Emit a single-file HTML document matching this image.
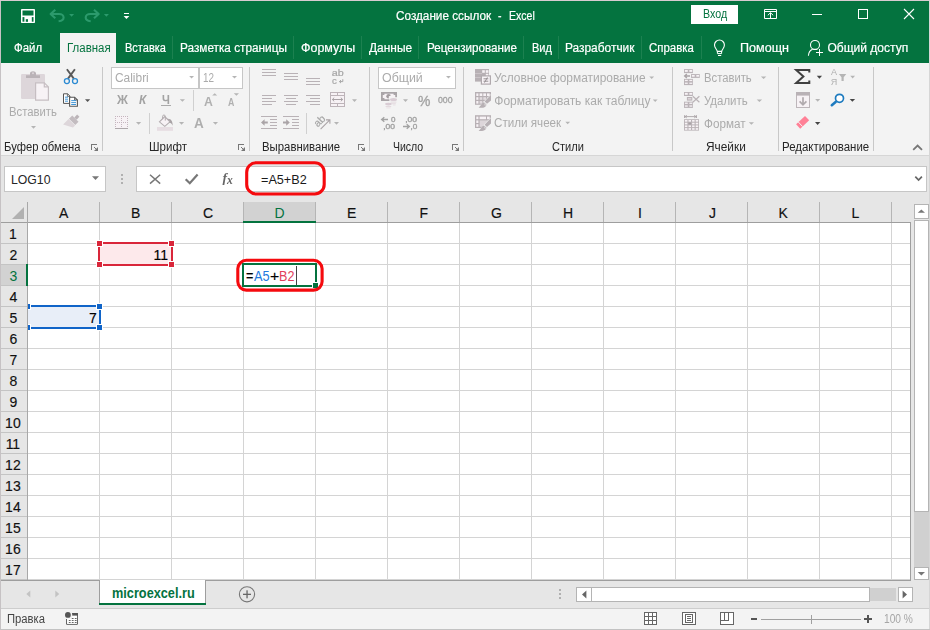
<!DOCTYPE html>
<html lang="ru"><head><meta charset="utf-8"><title>Excel</title>
<style>
html,body{margin:0;padding:0;}
body{width:930px;height:630px;overflow:hidden;position:relative;background:#e6e6e6;font-family:"Liberation Sans", sans-serif;}
#shapes,#icons{position:absolute;left:0;top:0;}
.g{position:absolute;left:0;top:0;width:930px;height:630px;will-change:transform;filter:opacity(1);}
.l{-webkit-text-stroke:0.15px;}
.t{position:absolute;white-space:pre;line-height:1;transform-origin:0 0;font-family:"Liberation Sans", sans-serif;}
</style></head><body>
<svg id="shapes" width="930" height="630" viewBox="0 0 930 630">
<g shape-rendering="crispEdges">
<rect x="0" y="0" width="930" height="630" fill="#e6e6e6" />
<rect x="0" y="0" width="930" height="63" fill="#04733f" />
<rect x="60" y="33" width="56" height="30" fill="#f3f3f3" />
<rect x="172" y="36" width="1" height="23" fill="#1c8150" />
<rect x="293" y="36" width="1" height="23" fill="#1c8150" />
<rect x="361" y="36" width="1" height="23" fill="#1c8150" />
<rect x="418" y="36" width="1" height="23" fill="#1c8150" />
<rect x="523" y="36" width="1" height="23" fill="#1c8150" />
<rect x="558" y="36" width="1" height="23" fill="#1c8150" />
<rect x="641" y="36" width="1" height="23" fill="#1c8150" />
<rect x="701" y="36" width="1" height="23" fill="#1c8150" />
<rect x="691" y="5" width="47" height="19" fill="#fff" rx="1"/>
<rect x="0" y="63" width="930" height="92" fill="#f3f3f3" />
<rect x="0" y="155" width="930" height="1" fill="#d6d6d6" />
<rect x="102" y="67" width="1" height="84" fill="#c8c8c8" />
<rect x="249" y="67" width="1" height="84" fill="#c8c8c8" />
<rect x="369" y="67" width="1" height="84" fill="#c8c8c8" />
<rect x="463" y="67" width="1" height="84" fill="#c8c8c8" />
<rect x="672" y="67" width="1" height="84" fill="#c8c8c8" />
<rect x="778" y="67" width="1" height="84" fill="#c8c8c8" />
<rect x="873" y="67" width="1" height="84" fill="#c8c8c8" />
<rect x="193" y="90" width="1" height="21" fill="#d0d0d0" />
<rect x="149" y="113" width="1" height="21" fill="#d0d0d0" />
<rect x="306" y="113" width="1" height="21" fill="#d0d0d0" />
<rect x="111" y="67" width="88" height="22" fill="#c6c6c6" />
<rect x="112" y="68" width="86" height="20" fill="#fff" />
<rect x="199" y="67" width="44" height="22" fill="#c6c6c6" />
<rect x="200" y="68" width="42" height="20" fill="#fff" />
<rect x="378" y="67" width="78" height="22" fill="#c6c6c6" />
<rect x="379" y="68" width="76" height="20" fill="#fff" />
<rect x="4" y="166" width="102" height="26" fill="#c6c6c6" />
<rect x="5" y="167" width="100" height="24" fill="#fff" />
<rect x="136" y="166" width="791" height="26" fill="#c6c6c6" />
<rect x="137" y="167" width="789" height="24" fill="#fff" />
<rect x="27" y="202" width="1" height="20" fill="#b5b5b5" />
<rect x="99" y="202" width="1" height="20" fill="#b5b5b5" />
<rect x="171" y="202" width="1" height="20" fill="#b5b5b5" />
<rect x="243" y="202" width="1" height="20" fill="#b5b5b5" />
<rect x="315" y="202" width="1" height="20" fill="#b5b5b5" />
<rect x="387" y="202" width="1" height="20" fill="#b5b5b5" />
<rect x="459" y="202" width="1" height="20" fill="#b5b5b5" />
<rect x="531" y="202" width="1" height="20" fill="#b5b5b5" />
<rect x="603" y="202" width="1" height="20" fill="#b5b5b5" />
<rect x="675" y="202" width="1" height="20" fill="#b5b5b5" />
<rect x="747" y="202" width="1" height="20" fill="#b5b5b5" />
<rect x="819" y="202" width="1" height="20" fill="#b5b5b5" />
<rect x="891" y="202" width="1" height="20" fill="#b5b5b5" />
<rect x="244" y="202" width="71" height="20" fill="#d2d2d2" />
<rect x="1" y="265" width="26" height="20" fill="#d2d2d2" />
<rect x="28" y="223" width="882" height="357" fill="#fff" />
<rect x="99" y="223" width="1" height="357" fill="#d4d4d4" />
<rect x="171" y="223" width="1" height="357" fill="#d4d4d4" />
<rect x="243" y="223" width="1" height="357" fill="#d4d4d4" />
<rect x="315" y="223" width="1" height="357" fill="#d4d4d4" />
<rect x="387" y="223" width="1" height="357" fill="#d4d4d4" />
<rect x="459" y="223" width="1" height="357" fill="#d4d4d4" />
<rect x="531" y="223" width="1" height="357" fill="#d4d4d4" />
<rect x="603" y="223" width="1" height="357" fill="#d4d4d4" />
<rect x="675" y="223" width="1" height="357" fill="#d4d4d4" />
<rect x="747" y="223" width="1" height="357" fill="#d4d4d4" />
<rect x="819" y="223" width="1" height="357" fill="#d4d4d4" />
<rect x="891" y="223" width="1" height="357" fill="#d4d4d4" />
<rect x="28" y="243" width="882" height="1" fill="#d4d4d4" />
<rect x="1" y="243" width="26" height="1" fill="#c4c4c4" />
<rect x="28" y="264" width="882" height="1" fill="#d4d4d4" />
<rect x="1" y="264" width="26" height="1" fill="#c4c4c4" />
<rect x="28" y="285" width="882" height="1" fill="#d4d4d4" />
<rect x="1" y="285" width="26" height="1" fill="#c4c4c4" />
<rect x="28" y="306" width="882" height="1" fill="#d4d4d4" />
<rect x="1" y="306" width="26" height="1" fill="#c4c4c4" />
<rect x="28" y="327" width="882" height="1" fill="#d4d4d4" />
<rect x="1" y="327" width="26" height="1" fill="#c4c4c4" />
<rect x="28" y="348" width="882" height="1" fill="#d4d4d4" />
<rect x="1" y="348" width="26" height="1" fill="#c4c4c4" />
<rect x="28" y="369" width="882" height="1" fill="#d4d4d4" />
<rect x="1" y="369" width="26" height="1" fill="#c4c4c4" />
<rect x="28" y="390" width="882" height="1" fill="#d4d4d4" />
<rect x="1" y="390" width="26" height="1" fill="#c4c4c4" />
<rect x="28" y="411" width="882" height="1" fill="#d4d4d4" />
<rect x="1" y="411" width="26" height="1" fill="#c4c4c4" />
<rect x="28" y="432" width="882" height="1" fill="#d4d4d4" />
<rect x="1" y="432" width="26" height="1" fill="#c4c4c4" />
<rect x="28" y="453" width="882" height="1" fill="#d4d4d4" />
<rect x="1" y="453" width="26" height="1" fill="#c4c4c4" />
<rect x="28" y="474" width="882" height="1" fill="#d4d4d4" />
<rect x="1" y="474" width="26" height="1" fill="#c4c4c4" />
<rect x="28" y="495" width="882" height="1" fill="#d4d4d4" />
<rect x="1" y="495" width="26" height="1" fill="#c4c4c4" />
<rect x="28" y="516" width="882" height="1" fill="#d4d4d4" />
<rect x="1" y="516" width="26" height="1" fill="#c4c4c4" />
<rect x="28" y="537" width="882" height="1" fill="#d4d4d4" />
<rect x="1" y="537" width="26" height="1" fill="#c4c4c4" />
<rect x="28" y="558" width="882" height="1" fill="#d4d4d4" />
<rect x="1" y="558" width="26" height="1" fill="#c4c4c4" />
<rect x="28" y="579" width="882" height="1" fill="#d4d4d4" />
<rect x="1" y="579" width="26" height="1" fill="#c4c4c4" />
<rect x="0" y="222" width="911" height="1" fill="#9e9e9e" />
<rect x="27" y="202" width="1" height="379" fill="#a8a8a8" />
<rect x="26" y="264" width="2" height="22" fill="#04733f" />
<rect x="243" y="221" width="73" height="2" fill="#04733f" />
<rect x="910" y="222" width="1" height="359" fill="#9e9e9e" />
<rect x="0" y="580" width="911" height="1" fill="#9e9e9e" />
<rect x="100" y="244" width="71" height="20" fill="#fde9eb" />
<rect x="98" y="242" width="75" height="2" fill="#d9263a" />
<rect x="98" y="264" width="75" height="2" fill="#d9263a" />
<rect x="98" y="242" width="2" height="24" fill="#d9263a" />
<rect x="171" y="242" width="2" height="24" fill="#d9263a" />
<rect x="168" y="240" width="7" height="7" fill="#fff" />
<rect x="169" y="241" width="5" height="5" fill="#d9263a" />
<rect x="168" y="261" width="7" height="7" fill="#fff" />
<rect x="169" y="262" width="5" height="5" fill="#d9263a" />
<rect x="96" y="240" width="7" height="7" fill="#fff" />
<rect x="97" y="241" width="5" height="5" fill="#d9263a" />
<rect x="96" y="261" width="7" height="7" fill="#fff" />
<rect x="97" y="262" width="5" height="5" fill="#d9263a" />
<rect x="28" y="307" width="71" height="20" fill="#e8eef8" />
<rect x="28" y="305" width="73" height="2" fill="#1064c8" />
<rect x="28" y="327" width="73" height="2" fill="#1064c8" />
<rect x="99" y="305" width="2" height="24" fill="#1064c8" />
<rect x="96" y="303" width="7" height="7" fill="#fff" />
<rect x="97" y="304" width="5" height="5" fill="#1064c8" />
<rect x="96" y="324" width="7" height="7" fill="#fff" />
<rect x="97" y="325" width="5" height="5" fill="#1064c8" />
<rect x="28" y="303" width="3" height="7" fill="#fff" />
<rect x="28" y="304" width="2" height="5" fill="#1064c8" />
<rect x="28" y="324" width="3" height="7" fill="#fff" />
<rect x="28" y="325" width="2" height="5" fill="#1064c8" />
<rect x="244" y="265" width="71" height="20" fill="#fff" />
<rect x="242" y="263" width="75" height="2" fill="#04733f" />
<rect x="242" y="285" width="75" height="2" fill="#04733f" />
<rect x="242" y="263" width="2" height="24" fill="#04733f" />
<rect x="315" y="263" width="2" height="24" fill="#04733f" />
<rect x="312" y="282" width="7" height="7" fill="#fff" />
<rect x="313" y="283" width="5" height="5" fill="#04733f" />
<rect x="296" y="266" width="1" height="19" fill="#444" />
<rect x="911" y="202" width="19" height="378" fill="#e6e6e6" />
<rect x="914" y="204" width="15" height="15" fill="#b4b4b4" />
<rect x="915" y="205" width="13" height="13" fill="#fff" />
<rect x="914" y="220" width="15" height="292" fill="#b4b4b4" />
<rect x="915" y="221" width="13" height="290" fill="#fff" />
<rect x="914" y="512" width="15" height="55" fill="#d0d0d0" />
<rect x="914" y="567" width="15" height="13" fill="#b4b4b4" />
<rect x="915" y="568" width="13" height="11" fill="#fff" />
<rect x="0" y="581" width="930" height="27" fill="#e6e6e6" />
<rect x="99" y="580" width="107" height="23" fill="#9e9e9e" />
<rect x="100" y="580" width="105" height="23" fill="#fff" />
<rect x="99" y="603" width="107" height="2" fill="#04733f" />
<rect x="576" y="587" width="16" height="15" fill="#b4b4b4" />
<rect x="577" y="588" width="14" height="13" fill="#fff" />
<rect x="591" y="587" width="279" height="15" fill="#b4b4b4" />
<rect x="592" y="588" width="277" height="13" fill="#fff" />
<rect x="870" y="588" width="26" height="13" fill="#d0d0d0" />
<rect x="898" y="587" width="15" height="15" fill="#b4b4b4" />
<rect x="899" y="588" width="13" height="13" fill="#fff" />
<rect x="559" y="589" width="2" height="2" fill="#b0b0b0" />
<rect x="559" y="593" width="2" height="2" fill="#b0b0b0" />
<rect x="559" y="597" width="2" height="2" fill="#b0b0b0" />
<rect x="121" y="174" width="2" height="2" fill="#b0b0b0" />
<rect x="121" y="178" width="2" height="2" fill="#b0b0b0" />
<rect x="121" y="182" width="2" height="2" fill="#b0b0b0" />
<rect x="0" y="608" width="930" height="22" fill="#f3f3f3" />
<rect x="0" y="608" width="930" height="1" fill="#cdcdcd" />
<rect x="761" y="619" width="100" height="1" fill="#a0a0a0" />
<rect x="811" y="615" width="1" height="9" fill="#a0a0a0" />
<rect x="751" y="618" width="6" height="2" fill="#555" />
<rect x="864" y="618" width="8" height="2" fill="#555" />
<rect x="867" y="615" width="2" height="8" fill="#555" />
<rect x="0" y="0" width="1" height="630" fill="#c6c2c4" />
<rect x="0" y="0" width="930" height="1" fill="#d8ccd1" />
<rect x="929" y="0" width="1" height="630" fill="#d6d6d6" />
<rect x="0" y="629" width="930" height="1" fill="#c2c2c2" />
</g>
</svg>
<span class="t" style="left:10.69px;top:173px;font-size:13.5px;color:#262626;transform:scaleX(0.9068);">LOG10</span>
<span class="t" style="left:261.30px;top:173px;font-size:13.5px;color:#1a1a1a;transform:scaleX(0.9361);">=A5+B2</span>
<span class="t l" style="left:59.00px;top:206px;font-size:14px;color:#111111;">A</span>
<span class="t l" style="left:131.00px;top:206px;font-size:14px;color:#111111;">B</span>
<span class="t l" style="left:203.00px;top:206px;font-size:14px;color:#111111;">C</span>
<span class="t" style="left:274.50px;top:206px;font-size:14px;color:#04733f;">D</span>
<span class="t l" style="left:347.00px;top:206px;font-size:14px;color:#111111;">E</span>
<span class="t l" style="left:419.50px;top:206px;font-size:14px;color:#111111;">F</span>
<span class="t l" style="left:491.00px;top:206px;font-size:14px;color:#111111;">G</span>
<span class="t l" style="left:563.00px;top:206px;font-size:14px;color:#111111;">H</span>
<span class="t l" style="left:638.00px;top:206px;font-size:14px;color:#111111;">I</span>
<span class="t l" style="left:709.00px;top:206px;font-size:14px;color:#111111;">J</span>
<span class="t l" style="left:778.50px;top:206px;font-size:14px;color:#111111;">K</span>
<span class="t l" style="left:851.50px;top:206px;font-size:14px;color:#111111;">L</span>
<span class="t l" style="left:9.00px;top:227px;font-size:14px;color:#111111;">1</span>
<span class="t l" style="left:9.50px;top:248px;font-size:14px;color:#111111;">2</span>
<span class="t" style="left:9.50px;top:269px;font-size:14px;color:#04733f;">3</span>
<span class="t l" style="left:9.50px;top:290px;font-size:14px;color:#111111;">4</span>
<span class="t l" style="left:9.50px;top:311px;font-size:14px;color:#111111;">5</span>
<span class="t l" style="left:9.50px;top:332px;font-size:14px;color:#111111;">6</span>
<span class="t l" style="left:9.50px;top:353px;font-size:14px;color:#111111;">7</span>
<span class="t l" style="left:9.50px;top:374px;font-size:14px;color:#111111;">8</span>
<span class="t l" style="left:9.50px;top:395px;font-size:14px;color:#111111;">9</span>
<span class="t l" style="left:5.11px;top:416px;font-size:14px;color:#111111;">10</span>
<span class="t l" style="left:5.63px;top:437px;font-size:14px;color:#111111;">11</span>
<span class="t l" style="left:5.11px;top:458px;font-size:14px;color:#111111;">12</span>
<span class="t l" style="left:5.11px;top:479px;font-size:14px;color:#111111;">13</span>
<span class="t l" style="left:5.11px;top:500px;font-size:14px;color:#111111;">14</span>
<span class="t l" style="left:5.11px;top:521px;font-size:14px;color:#111111;">15</span>
<span class="t l" style="left:5.11px;top:542px;font-size:14px;color:#111111;">16</span>
<span class="t l" style="left:5.11px;top:563px;font-size:14px;color:#111111;">17</span>
<span class="t l" style="left:153.45px;top:248px;font-size:14px;color:#000;">11</span>
<span class="t l" style="left:89.00px;top:311px;font-size:14px;color:#000;">7</span>
<span class="t l" style="left:246.30px;top:269px;font-size:14px;color:#000;transform:scaleX(0.9000);">=</span>
<span class="t" style="left:254.40px;top:269px;font-size:14px;color:#2279e0;transform:scaleX(0.9113);">A5</span>
<span class="t l" style="left:270.00px;top:269px;font-size:14px;color:#000;transform:scaleX(1.1250);">+</span>
<span class="t" style="left:279.30px;top:269px;font-size:14px;color:#e2405c;transform:scaleX(0.8997);">B2</span>
<span class="t" style="left:111.70px;top:586px;font-size:14px;color:#04733f;font-weight:bold;transform:scaleX(0.9083);">microexcel.ru</span>
<div class="g">
<svg id="icons" width="930" height="630" viewBox="0 0 930 630">
<rect x="21" y="9" width="14" height="14" fill="#fff" rx="0.8"/>
<rect x="22.5" y="10.5" width="11" height="5" fill="#04733f" />
<rect x="22.5" y="17.1" width="1.9" height="4.6" fill="#04733f" />
<rect x="31.8" y="17.1" width="1.7" height="4.6" fill="#04733f" />
<rect x="25.8" y="19.2" width="2.2" height="2.6" fill="#04733f" />
<path d="M55.3 9.7L50.6 14L55.3 18.3M51 14H59C62 14 63.6 15.8 63.6 17.5C63.6 19.6 61.6 21 58.6 21.3" fill="none" stroke="#2c9a6c" stroke-width="2.1" stroke-linejoin="round"/>
<path d="M69.1 14H74.1L71.6 16.8Z" fill="#2c9a6c" />
<path d="M94 9.7L98.7 14L94 18.3M98.3 14H90.3C87.3 14 85.7 15.8 85.7 17.5C85.7 19.6 87.7 21 90.7 21.3" fill="none" stroke="#2c9a6c" stroke-width="2.1" stroke-linejoin="round"/>
<path d="M103.9 14H108.9L106.4 16.8Z" fill="#2c9a6c" />
<rect x="124" y="13" width="5" height="1" fill="#fff" />
<path d="M123.6 16H129.4L126.5 19Z" fill="#fff" />
<path d="M764.5 9.5H776.5V18.5H764.5ZM764.5 11.5H776.5" fill="none" stroke="#fff" stroke-width="1" />
<path d="M770.5 18V13M767.8 15.3L770.5 12.7L773.2 15.3" fill="none" stroke="#fff" stroke-width="1" />
<rect x="812" y="14" width="10" height="1" fill="#fff" shape-rendering="crispEdges"/>
<path d="M858.5 9.5H867.5V18.5H858.5Z" fill="none" stroke="#fff" stroke-width="1" shape-rendering="crispEdges"/>
<path d="M904 9L914 19M914 9L904 19" fill="none" stroke="#fff" stroke-width="1.1" />
<path d="M717.3 51.4C717 49.3 714.5 48 714.5 45A4.95 4.95 0 1 1 724.4 45C724.4 48 722 49.3 721.7 51.4Z" fill="none" stroke="#fff" stroke-width="1.1" />
<path d="M717.4 51.5H721.6V53.6H717.4Z" fill="none" stroke="#fff" stroke-width="1" />
<rect x="718" y="55" width="3.2" height="1" fill="#fff" />
<circle cx="815" cy="44.9" r="4.5" fill="none" stroke="#fff" stroke-width="1.05"/>
<path d="M812.6 49.2C810 50.2 808.6 52.5 808.4 55.8" fill="none" stroke="#fff" stroke-width="1.05" />
<path d="M812.6 49.3H817.5" fill="none" stroke="#fff" stroke-width="1" />
<rect x="816" y="52" width="7" height="1" fill="#fff" />
<rect x="819" y="49" width="1" height="7" fill="#fff" />
<rect x="21" y="74" width="24" height="25" fill="#ddd6da" rx="1.3"/>
<path d="M26 78V75.2H30V73.2C30 70.5 36 70.5 36 73.2V75.2H40V78Z" fill="#bab3b7" />
<circle cx="33" cy="73.3" r="1" fill="#ddd6da"/>
<path d="M35.6 82.8H44.3L48.4 86.9V100.2H35.6Z" fill="#f7f2f5" stroke="#c6bec2" stroke-width="1.2" />
<path d="M44.3 82.8V86.9H48.4" fill="none" stroke="#c6bec2" stroke-width="1.2" />
<path d="M31 126H36L33.5 128.8Z" fill="#b5b5b5" />
<path d="M66.9 69.3L73.8 78.6M74.9 69.3L68 78.6" fill="none" stroke="#595959" stroke-width="1.9" />
<circle cx="66.9" cy="81.1" r="2.5" fill="none" stroke="#2b8ad2" stroke-width="1.3"/>
<circle cx="75" cy="81.1" r="2.5" fill="none" stroke="#2b8ad2" stroke-width="1.3"/>
<path d="M63.5 93.8H67.6L70 96.2V103.4H63.5Z" fill="#fff" stroke="#555" stroke-width="1" />
<path d="M69.6 97.2H74.6L77.4 100V106.3H69.6Z" fill="#fff" stroke="#555" stroke-width="1.1" />
<path d="M74.6 97.2V100H77.4" fill="none" stroke="#555" stroke-width="0.9" />
<path d="M67.4 93.8V96.4H70" fill="none" stroke="#555" stroke-width="0.8" />
<rect x="65" y="96.7" width="3" height="0.9" fill="#2b8ad2" />
<rect x="65" y="98.7" width="3" height="0.9" fill="#2b8ad2" />
<rect x="65" y="100.7" width="3" height="0.9" fill="#2b8ad2" />
<rect x="71.2" y="100.2" width="4.8" height="0.9" fill="#2b8ad2" />
<rect x="71.2" y="102.2" width="4.8" height="0.9" fill="#2b8ad2" />
<rect x="71.2" y="104.1" width="4.8" height="0.9" fill="#2b8ad2" />
<path d="M85 99.2H90.2L87.6 102Z" fill="#555" />
<g transform="translate(71,123) rotate(-45)">
<rect x="6.3" y="-1.6" width="4" height="3.2" fill="#bbb4b8" />
<rect x="1.6" y="-4.4" width="4.6" height="8.8" fill="#c3bcc0" />
<path d="M1.2 -4.6L-6.6 -4.6L-1.8 4.6L1.2 4.6Z" fill="#ddd6da" />
</g>
<path d="M189.2 76H194L191.6 78.4Z" fill="#b5b5b5" />
<path d="M232 76H237L234.5 78.4Z" fill="#b5b5b5" />
<rect x="161" y="105" width="10" height="1" fill="#ababab" />
<path d="M179.8 99.2H185L182.4 101.8Z" fill="#b5b5b5" />
<path d="M212.2 95.6L214.7 93.2L217.2 95.6Z" fill="#b5b5b5" />
<path d="M233.8 93.3H239L236.4 95.8Z" fill="#b5b5b5" />
<rect x="115" y="116" width="13" height="12" fill="#f7f2f5" />
<path d="M115.5 116V128M121.5 116V128M127.5 116V128M115 116.5H128M115 122.5H128" fill="none" stroke="#c4b6be" stroke-width="1" stroke-dasharray="1 1" shape-rendering="crispEdges"/>
<rect x="115" y="128" width="13" height="1" fill="#aea8ab" />
<path d="M136 122H141.2L138.6 124.7Z" fill="#b5b5b5" />
<path d="M159.4 121.8L164.8 116.5L170 121.8L164.8 126.3Z" fill="#f7f2f5" stroke="#b3adb0" stroke-width="1.1" />
<path d="M162.6 119.2V116.2C162.6 114.6 165.3 114.6 165.3 116.2V120.6" fill="none" stroke="#b3adb0" stroke-width="1" />
<path d="M167.4 118.7C171 118.4 172.9 121.3 172.6 125.7C171.5 123.3 170.4 122.7 168.8 122.6L170.2 121.6Z" fill="#a8a2a5" />
<rect x="157" y="127" width="16" height="3.8" fill="#e6dde2" />
<path d="M179 122H184.1L181.55 124.7Z" fill="#b5b5b5" />
<path d="M212.9 122H218L215.45 124.7Z" fill="#b5b5b5" />
<rect x="262" y="69" width="14" height="1" fill="#b9b2b6" shape-rendering="crispEdges"/>
<rect x="262" y="72" width="14" height="1" fill="#b9b2b6" shape-rendering="crispEdges"/>
<rect x="262" y="75" width="14" height="1" fill="#b9b2b6" shape-rendering="crispEdges"/>
<rect x="284" y="73" width="14" height="1" fill="#b9b2b6" shape-rendering="crispEdges"/>
<rect x="284" y="76" width="14" height="1" fill="#b9b2b6" shape-rendering="crispEdges"/>
<rect x="284" y="79" width="14" height="1" fill="#b9b2b6" shape-rendering="crispEdges"/>
<rect x="306" y="78" width="14" height="1" fill="#b9b2b6" shape-rendering="crispEdges"/>
<rect x="306" y="81" width="14" height="1" fill="#b9b2b6" shape-rendering="crispEdges"/>
<rect x="306" y="84" width="14" height="1" fill="#b9b2b6" shape-rendering="crispEdges"/>
<rect x="262" y="95" width="14" height="1" fill="#b9b2b6" shape-rendering="crispEdges"/>
<rect x="262" y="98" width="10" height="1" fill="#b9b2b6" shape-rendering="crispEdges"/>
<rect x="262" y="101" width="14" height="1" fill="#b9b2b6" shape-rendering="crispEdges"/>
<rect x="262" y="104" width="10" height="1" fill="#b9b2b6" shape-rendering="crispEdges"/>
<rect x="284.0" y="95" width="14" height="1" fill="#b9b2b6" shape-rendering="crispEdges"/>
<rect x="286.0" y="98" width="10" height="1" fill="#b9b2b6" shape-rendering="crispEdges"/>
<rect x="284.0" y="101" width="14" height="1" fill="#b9b2b6" shape-rendering="crispEdges"/>
<rect x="286.0" y="104" width="10" height="1" fill="#b9b2b6" shape-rendering="crispEdges"/>
<rect x="306" y="95" width="14" height="1" fill="#b9b2b6" shape-rendering="crispEdges"/>
<rect x="310" y="98" width="10" height="1" fill="#b9b2b6" shape-rendering="crispEdges"/>
<rect x="306" y="101" width="14" height="1" fill="#b9b2b6" shape-rendering="crispEdges"/>
<rect x="310" y="104" width="10" height="1" fill="#b9b2b6" shape-rendering="crispEdges"/>
<text x="331.7" y="76.3" font-family="Liberation Sans" font-size="9.6" fill="#a6a6a6" font-weight="normal" font-style="normal" textLength="12" lengthAdjust="spacingAndGlyphs" stroke="#a6a6a6" stroke-width="0.2">ab</text>
<text x="331.9" y="83.8" font-family="Liberation Sans" font-size="9.6" fill="#a6a6a6" font-weight="normal" font-style="normal" stroke="#a6a6a6" stroke-width="0.2">c</text>
<path d="M342.8 79.2V81.6H339.6M341 80.1L339.4 81.6L341 83.1" fill="none" stroke="#a6a6a6" stroke-width="1" />
<rect x="330.5" y="92.5" width="14" height="14" fill="#f7f2f5" stroke="#bdb4b9" stroke-width="1"/>
<path d="M330.5 95.5H344.5M330.5 103.5H344.5M337.5 92.5V95.5M337.5 103.5V106.5" fill="none" stroke="#bdb4b9" stroke-width="1" shape-rendering="crispEdges"/>
<path d="M332.4 99.5H342.6M334.2 97.7L332.3 99.5L334.2 101.3M340.8 97.7L342.7 99.5L340.8 101.3" fill="none" stroke="#a9a3a6" stroke-width="1" />
<path d="M352 99.2H357L354.5 101.9Z" fill="#b5b5b5" />
<rect x="261" y="116" width="16" height="1" fill="#b9b2b6" shape-rendering="crispEdges"/>
<rect x="261" y="128" width="16" height="1" fill="#b9b2b6" shape-rendering="crispEdges"/>
<rect x="269.5" y="119" width="7.5" height="1" fill="#b9b2b6" shape-rendering="crispEdges"/>
<rect x="269.5" y="122" width="7.5" height="1" fill="#b9b2b6" shape-rendering="crispEdges"/>
<rect x="269.5" y="125" width="7.5" height="1" fill="#b9b2b6" shape-rendering="crispEdges"/>
<rect x="283" y="116" width="16" height="1" fill="#b9b2b6" shape-rendering="crispEdges"/>
<rect x="283" y="128" width="16" height="1" fill="#b9b2b6" shape-rendering="crispEdges"/>
<rect x="291.5" y="119" width="7.5" height="1" fill="#b9b2b6" shape-rendering="crispEdges"/>
<rect x="291.5" y="122" width="7.5" height="1" fill="#b9b2b6" shape-rendering="crispEdges"/>
<rect x="291.5" y="125" width="7.5" height="1" fill="#b9b2b6" shape-rendering="crispEdges"/>
<path d="M261 122.5L264.6 119.2V121.5H267.8V123.5H264.6V125.8Z" fill="#aaa4a7" />
<path d="M289.8 122.5L286.2 119.2V121.5H283V123.5H286.2V125.8Z" fill="#aaa4a7" />
<g transform="translate(320.3,121.6) rotate(-45)">
<text x="-6" y="2.4" font-family="Liberation Sans" font-size="10.5" fill="#a6a6a6" font-weight="normal" font-style="normal" stroke="#a6a6a6" stroke-width="0.2">ab</text>
</g>
<path d="M320.6 129.2L329.6 120.2M326 119.9H329.9V123.8" fill="none" stroke="#aaa4a7" stroke-width="1.1" />
<path d="M334 122H339L336.5 124.7Z" fill="#b5b5b5" />
<path d="M446 76H450.9L448.45 78.4Z" fill="#b5b5b5" />
<rect x="381" y="92" width="16" height="9" fill="#aaa5a8" />
<path d="M384.4 93.8H393.6V94.9H395.2V98.1H393.6V99.2H384.4V98.1H382.8V94.9H384.4Z" fill="#f7f2f5" />
<circle cx="388.6" cy="96.3" r="2.3" fill="#a39da0"/>
<path d="M388.8 96.3L391.2 95.4V98.9H388.8Z" fill="#f7f2f5" />
<rect x="389.4" y="97.2" width="8.2" height="8.6" fill="#f3f3f3" />
<ellipse cx="393.5" cy="99.5" rx="3.5" ry="1.5" fill="#d9ccd4"/>
<rect x="390.6" y="101.6" width="5.8" height="0.9" fill="#e1d6dc" />
<rect x="391.2" y="103.3" width="4.6" height="0.9" fill="#e1d6dc" />
<rect x="393" y="104.6" width="2.6" height="0.8" fill="#e6dde2" />
<ellipse cx="388.4" cy="104.1" rx="3.3" ry="1.4" fill="#d9ccd4"/>
<rect x="385.6" y="106" width="5.6" height="0.9" fill="#e1d6dc" />
<rect x="386.2" y="107.5" width="4.4" height="0.8" fill="#e6dde2" />
<path d="M403 99.2H408L405.5 101.9Z" fill="#b5b5b5" />
<path d="M388 119.5H382M384.3 117.2L381.6 119.5L384.3 121.8" fill="none" stroke="#a3a3a3" stroke-width="1.3" />
<text x="391" y="121.5" font-family="Liberation Sans" font-size="8" fill="#a3a3a3" font-weight="normal" font-style="normal" stroke="#a3a3a3" stroke-width="0.4">0</text>
<text x="383.2" y="128.8" font-family="Liberation Sans" font-size="8" fill="#a3a3a3" font-weight="normal" font-style="normal" textLength="11.8" lengthAdjust="spacingAndGlyphs" stroke="#a3a3a3" stroke-width="0.4">,00</text>
<text x="405.2" y="121.5" font-family="Liberation Sans" font-size="8" fill="#a3a3a3" font-weight="normal" font-style="normal" textLength="11.8" lengthAdjust="spacingAndGlyphs" stroke="#a3a3a3" stroke-width="0.4">,00</text>
<path d="M403 126.5H409M406.7 124.2L409.4 126.5L406.7 128.8" fill="none" stroke="#a3a3a3" stroke-width="1.3" />
<text x="410.4" y="128.8" font-family="Liberation Sans" font-size="8" fill="#a3a3a3" font-weight="normal" font-style="normal" textLength="6.8" lengthAdjust="spacingAndGlyphs" stroke="#a3a3a3" stroke-width="0.4">,0</text>
<rect x="475" y="69" width="14" height="12.6" fill="#b7b0b4" />
<rect x="482.2" y="70.2" width="2.6" height="2.6" fill="#f7f2f5" />
<rect x="485.8" y="70.2" width="2.6" height="2.6" fill="#f7f2f5" />
<rect x="485.8" y="73.8" width="2.6" height="2.6" fill="#f7f2f5" />
<rect x="475" y="73" width="7" height="0.8" fill="#cfc8cc" />
<rect x="475" y="77" width="6" height="0.8" fill="#cfc8cc" />
<rect x="481.4" y="75.9" width="9" height="8.2" fill="#f7f2f5" stroke="#b0a9ad" stroke-width="1.2"/>
<path d="M483.5 78.8H488.3M483.5 81.2H488.3M487.4 77.4L484.5 82.6" fill="none" stroke="#8e888b" stroke-width="0.9" />
<rect x="475" y="92" width="16" height="12.8" fill="#b7b0b4" />
<rect x="476.3" y="93.4" width="2.1" height="2.6" fill="#f7f2f5" />
<rect x="479.6" y="93.4" width="2.7" height="2.6" fill="#f7f2f5" />
<rect x="483.3" y="93.4" width="2.7" height="2.6" fill="#f7f2f5" />
<rect x="487" y="93.4" width="2.7" height="2.6" fill="#f7f2f5" />
<rect x="476.3" y="97.2" width="2.1" height="2.6" fill="#f7f2f5" />
<rect x="479.6" y="97.2" width="2.7" height="2.6" fill="#e2dbdf" />
<rect x="483.3" y="97.2" width="2.7" height="2.6" fill="#e2dbdf" />
<rect x="487" y="97.2" width="2.7" height="2.6" fill="#e2dbdf" />
<rect x="476.3" y="101" width="2.1" height="2.6" fill="#f7f2f5" />
<rect x="479.6" y="101" width="2.7" height="2.6" fill="#e2dbdf" />
<rect x="483.3" y="101" width="2.7" height="2.6" fill="#e2dbdf" />
<rect x="487" y="101" width="2.7" height="2.6" fill="#e2dbdf" />
<path d="M491.8 93.2L491.8 105.6L480 105.6Z" fill="#f3f3f3" />
<path d="M491 94.8L491 100.4L487 103.8L484.6 101.6Z" fill="#b7b0b4" />
<path d="M484 102.2C481.4 102.6 481.4 105.6 478.6 107.6C482.6 108.4 486.4 107.2 486.4 104.4Z" fill="#b7b0b4" />
<path d="M484.4 103.8C485.2 104.2 485.4 104.8 485.2 105.6" fill="none" stroke="#f3f3f3" stroke-width="0.8" />
<rect x="475" y="115.2" width="16" height="12.8" fill="#b7b0b4" />
<rect x="476.3" y="116.60000000000001" width="2.1" height="2.6" fill="#f7f2f5" />
<rect x="479.6" y="116.60000000000001" width="6.4" height="2.6" fill="#f7f2f5" />
<rect x="487" y="116.60000000000001" width="2.7" height="2.6" fill="#f7f2f5" />
<rect x="476.3" y="120.4" width="2.1" height="2.6" fill="#f7f2f5" />
<rect x="476.3" y="124.2" width="2.1" height="2.6" fill="#f7f2f5" />
<rect x="479.6" y="120.4" width="10.1" height="6.4" fill="#ddd6da" />
<path d="M491.8 116.4L491.8 128.8L480 128.8Z" fill="#f3f3f3" />
<path d="M491 118.0L491 123.60000000000001L487 127.0L484.6 124.8Z" fill="#b7b0b4" />
<path d="M484 125.4C481.4 125.8 481.4 128.8 478.6 130.8C482.6 131.6 486.4 130.4 486.4 127.60000000000001Z" fill="#b7b0b4" />
<path d="M484.4 127.0C485.2 127.4 485.4 128.0 485.2 128.8" fill="none" stroke="#f3f3f3" stroke-width="0.8" />
<path d="M649.3 76.4H654.1L651.7 78.9Z" fill="#b5b5b5" />
<path d="M652.8 99.4H657.6L655.2 101.9Z" fill="#b5b5b5" />
<path d="M565.3 121.8H570.1L567.7 124.3Z" fill="#b5b5b5" />
<rect x="684" y="69.1" width="8.9" height="4.0" fill="#bab3b7" />
<rect x="684.9" y="70.0" width="2.85" height="1.9" fill="#f7f2f5" />
<rect x="689.35" y="70.0" width="2.85" height="1.9" fill="#f7f2f5" />
<rect x="691" y="74.1" width="8.8" height="3.8000000000000003" fill="#bab3b7" />
<rect x="691.9" y="75.0" width="2.8000000000000003" height="1.7000000000000002" fill="#f7f2f5" />
<rect x="696.3" y="75.0" width="2.8000000000000003" height="1.7000000000000002" fill="#f7f2f5" />
<rect x="684" y="78.9" width="8.9" height="6.199999999999999" fill="#bab3b7" />
<rect x="684.9" y="79.80000000000001" width="2.85" height="1.2999999999999998" fill="#f7f2f5" />
<rect x="684.9" y="82.60000000000001" width="2.85" height="1.2999999999999998" fill="#f7f2f5" />
<rect x="689.35" y="79.80000000000001" width="2.85" height="1.2999999999999998" fill="#f7f2f5" />
<rect x="689.35" y="82.60000000000001" width="2.85" height="1.2999999999999998" fill="#f7f2f5" />
<path d="M690 76H685M686.9 74L684.6 76L686.9 78" fill="none" stroke="#a9a3a6" stroke-width="1.3" />
<rect x="684" y="92" width="8.9" height="4.0" fill="#bab3b7" />
<rect x="684.9" y="92.9" width="2.85" height="1.9" fill="#f7f2f5" />
<rect x="689.35" y="92.9" width="2.85" height="1.9" fill="#f7f2f5" />
<rect x="684" y="101.7" width="8.9" height="6.199999999999999" fill="#bab3b7" />
<rect x="684.9" y="102.60000000000001" width="2.85" height="1.2999999999999998" fill="#f7f2f5" />
<rect x="684.9" y="105.4" width="2.85" height="1.2999999999999998" fill="#f7f2f5" />
<rect x="689.35" y="102.60000000000001" width="2.85" height="1.2999999999999998" fill="#f7f2f5" />
<rect x="689.35" y="105.4" width="2.85" height="1.2999999999999998" fill="#f7f2f5" />
<rect x="686.9" y="97" width="5.4" height="3.6" fill="#bab3b7" />
<rect x="687.9" y="98" width="3.4" height="1.6" fill="#dcd5d9" />
<path d="M692.8 96.2L699.4 102.2M699.4 96.2L692.8 102.2" fill="none" stroke="#bab3b7" stroke-width="1.2" />
<path d="M684.5 115.2V118M696.5 115.2V118M685 116.6H696M686.8 115.3L685 116.6L686.8 117.9M694.2 115.3L696 116.6L694.2 117.9" fill="none" stroke="#aaa4a7" stroke-width="0.9" />
<rect x="684" y="119.2" width="15" height="11.4" fill="#bab3b7" />
<rect x="684.9" y="120.0" width="2.5" height="1.7" fill="#f7f2f5" />
<rect x="684.9" y="122.7" width="2.5" height="1.7" fill="#f7f2f5" />
<rect x="684.9" y="125.4" width="2.5" height="1.7" fill="#f7f2f5" />
<rect x="684.9" y="128.1" width="2.5" height="1.7" fill="#f7f2f5" />
<rect x="688.5" y="120.0" width="2.5" height="1.7" fill="#f7f2f5" />
<rect x="688.5" y="122.7" width="2.5" height="1.7" fill="#a9a2a6" />
<rect x="688.5" y="125.4" width="2.5" height="1.7" fill="#f7f2f5" />
<rect x="688.5" y="128.1" width="2.5" height="1.7" fill="#f7f2f5" />
<rect x="692.1" y="120.0" width="2.5" height="1.7" fill="#f7f2f5" />
<rect x="692.1" y="122.7" width="2.5" height="1.7" fill="#f7f2f5" />
<rect x="692.1" y="125.4" width="2.5" height="1.7" fill="#f7f2f5" />
<rect x="692.1" y="128.1" width="2.5" height="1.7" fill="#f7f2f5" />
<rect x="695.6999999999999" y="120.0" width="2.5" height="1.7" fill="#f7f2f5" />
<rect x="695.6999999999999" y="122.7" width="2.5" height="1.7" fill="#f7f2f5" />
<rect x="695.6999999999999" y="125.4" width="2.5" height="1.7" fill="#f7f2f5" />
<rect x="695.6999999999999" y="128.1" width="2.5" height="1.7" fill="#f7f2f5" />
<path d="M760.9 76.4H766.3L763.5999999999999 78.9Z" fill="#b5b5b5" />
<path d="M756.7 99.4H762.1L759.4000000000001 101.9Z" fill="#b5b5b5" />
<path d="M748.8 122.2H754L751.4 124.7Z" fill="#b5b5b5" />
<path d="M809.3 72.4V69.9H796.2L803.4 76.4L796.2 82.9H809.3V80.4" fill="none" stroke="#404040" stroke-width="2" stroke-linejoin="miter"/>
<path d="M816.8 75.8H822L819.4 78.8Z" fill="#444" />
<text x="830.9" y="75.4" font-family="Liberation Sans" font-size="9" fill="#b0b0b0" font-weight="normal" font-style="normal" >A</text>
<text x="830.7" y="84.9" font-family="Liberation Sans" font-size="9" fill="#b0b0b0" font-weight="normal" font-style="normal" >Я</text>
<path d="M838.9 74.1H846.3L843.7 77.2V80.9H841.5V77.2Z" fill="#b5b5b5" />
<path d="M850.3 75.8H855L852.65 78.6Z" fill="#b5b5b5" />
<rect x="796.5" y="92.5" width="13" height="15" fill="#f7f2f5" stroke="#bdb6ba" stroke-width="1"/>
<rect x="796" y="92" width="14" height="3.6" fill="#b9b2b6" />
<path d="M803 97.2V104.6M799.6 101.4L803 104.9L806.4 101.4" fill="none" stroke="#b0aaad" stroke-width="1.7" />
<path d="M815.2 99H820.2L817.7 101.7Z" fill="#b5b5b5" />
<path d="M835.6 102L831.8 105.2" fill="none" stroke="#1e7bbf" stroke-width="2.6" stroke-linecap="round"/>
<circle cx="839.5" cy="98.3" r="4" fill="#fff" stroke="#1e7bbf" stroke-width="1.7"/>
<path d="M849.7 99H855.1L852.4000000000001 101.8Z" fill="#444" />
<path d="M805 116L809.2 120.2L800.2 128.7L796.1 124.2Z" fill="#ff8096" />
<path d="M798.3 122L802.5 126.5" fill="none" stroke="#f3f3f3" stroke-width="1" />
<path d="M815 122H820.3L817.65 125Z" fill="#444" />
<path d="M913.2 149.8L917.6 145.5L922 149.8" fill="none" stroke="#777" stroke-width="1.8" />
<rect x="91" y="144" width="6" height="1" fill="#777" shape-rendering="crispEdges"/>
<rect x="91" y="144" width="1" height="6" fill="#777" shape-rendering="crispEdges"/>
<path d="M98 147V151H94Z" fill="#777" />
<path d="M94 147L96.5 149.5" fill="none" stroke="#777" stroke-width="1" />
<rect x="238" y="144" width="6" height="1" fill="#777" shape-rendering="crispEdges"/>
<rect x="238" y="144" width="1" height="6" fill="#777" shape-rendering="crispEdges"/>
<path d="M245 147V151H241Z" fill="#777" />
<path d="M241 147L243.5 149.5" fill="none" stroke="#777" stroke-width="1" />
<rect x="358" y="144" width="6" height="1" fill="#777" shape-rendering="crispEdges"/>
<rect x="358" y="144" width="1" height="6" fill="#777" shape-rendering="crispEdges"/>
<path d="M365 147V151H361Z" fill="#777" />
<path d="M361 147L363.5 149.5" fill="none" stroke="#777" stroke-width="1" />
<rect x="452" y="144" width="6" height="1" fill="#777" shape-rendering="crispEdges"/>
<rect x="452" y="144" width="1" height="6" fill="#777" shape-rendering="crispEdges"/>
<path d="M459 147V151H455Z" fill="#777" />
<path d="M455 147L457.5 149.5" fill="none" stroke="#777" stroke-width="1" />
<path d="M92 176.3H99L95.5 179.9Z" fill="#777" />
<path d="M150 174.8L160.2 183.6M160.2 174.8L150 183.6" fill="none" stroke="#777" stroke-width="1.5" />
<path d="M185.7 179.2L189.8 183.2L197.6 174.6" fill="none" stroke="#777" stroke-width="2.2" />
<text x="222.6" y="182.2" font-family="Liberation Serif" font-size="13.5" fill="#666" font-weight="bold" font-style="italic" >f</text>
<text x="227" y="183.7" font-family="Liberation Serif" font-size="11.5" fill="#666" font-weight="bold" font-style="italic" >x</text>
<path d="M915.3 176.6L918.6 180L921.9 176.6" fill="none" stroke="#666" stroke-width="1.7" />
<path d="M24 207V219H12Z" fill="#b1b1b1" />
<path d="M917.7 212.8H925L921.35 209.4Z" fill="#777" />
<path d="M917.7 572H925L921.35 575.4Z" fill="#777" />
<path d="M586.4 590.6V598.4L582 594.5Z" fill="#666" />
<path d="M902.6 590.6V598.4L907 594.5Z" fill="#666" />
<path d="M30.3 590.6V597.4L26.3 594Z" fill="#c3c3c3" />
<path d="M55.3 590.6V597.4L59.3 594Z" fill="#c3c3c3" />
<circle cx="247" cy="594.3" r="7.6" fill="none" stroke="#777" stroke-width="1.1"/>
<rect x="243" y="593.7" width="8" height="1.3" fill="#666" />
<rect x="246.4" y="590.3" width="1.3" height="8" fill="#666" />
<circle cx="67.9" cy="614.9" r="2.9" fill="#555"/>
<path d="M66.6 619V624.3H77.4V613.5H72.2" fill="none" stroke="#555" stroke-width="1" />
<rect x="67.1" y="618.8" width="9.8" height="5" fill="#fff" />
<rect x="72.2" y="615.5" width="4.7" height="4" fill="#fff" />
<rect x="72.2" y="613" width="5.7" height="2.6" fill="#555" />
<rect x="71.8" y="618" width="1.8" height="0.9" fill="#555" />
<rect x="74.8" y="618" width="1.8" height="0.9" fill="#555" />
<rect x="68.8" y="620" width="1.8" height="0.9" fill="#555" />
<rect x="71.8" y="620" width="1.8" height="0.9" fill="#555" />
<rect x="74.8" y="620" width="1.8" height="0.9" fill="#555" />
<rect x="68.8" y="622" width="1.8" height="0.9" fill="#555" />
<rect x="71.8" y="622" width="1.8" height="0.9" fill="#555" />
<rect x="74.8" y="622" width="1.8" height="0.9" fill="#555" />
<rect x="644.5" y="612.5" width="12" height="12" fill="#fff" stroke="#666" stroke-width="1" shape-rendering="crispEdges"/>
<path d="M648.5 612.5V624.5M652.5 612.5V624.5M644.5 616.5H656.5M644.5 620.5H656.5" fill="none" stroke="#666" stroke-width="1" shape-rendering="crispEdges"/>
<rect x="682.5" y="612.5" width="13" height="12" fill="#fff" stroke="#666" stroke-width="1" shape-rendering="crispEdges"/>
<rect x="685.5" y="614.5" width="7" height="8" fill="#fff" stroke="#666" stroke-width="1" shape-rendering="crispEdges"/>
<path d="M687 616.5H691M687 618.5H691M687 620.5H691" fill="none" stroke="#666" stroke-width="1" shape-rendering="crispEdges"/>
<rect x="720.5" y="612.5" width="13" height="12" fill="#fff" stroke="#666" stroke-width="1" shape-rendering="crispEdges"/>
<path d="M724.5 612.5V620M728.5 612.5V620.5M720.5 620.5H729" fill="none" stroke="#666" stroke-width="1" shape-rendering="crispEdges"/>
<rect x="246.7" y="162.7" width="77.5" height="31.3" rx="9.5" fill="none" stroke="#f50a0e" stroke-width="3.1"/>
<rect x="237.8" y="260.3" width="84.3" height="29.8" rx="8.5" fill="none" stroke="#f50a0e" stroke-width="3.1"/>
</svg>
<span class="t" style="left:395.50px;top:10px;font-size:12px;color:#ffffff;-webkit-text-stroke:0.2px;transform:scaleX(0.9786);">Создание ссылок</span>
<span class="t" style="left:498.00px;top:10px;font-size:12px;color:#ffffff;-webkit-text-stroke:0.2px;transform:scaleX(0.8750);">-</span>
<span class="t" style="left:508.70px;top:10px;font-size:12px;color:#ffffff;-webkit-text-stroke:0.2px;transform:scaleX(0.8787);">Excel</span>
<span class="t" style="left:702.80px;top:8px;font-size:12px;color:#04733f;transform:scaleX(0.8878);">Вход</span>
<span class="t" style="left:14.20px;top:42px;font-size:12px;color:#ffffff;-webkit-text-stroke:0.2px;transform:scaleX(0.9525);">Файл</span>
<span class="t" style="left:66.50px;top:42px;font-size:12px;color:#04733f;transform:scaleX(0.9563);">Главная</span>
<span class="t" style="left:124.50px;top:42px;font-size:12px;color:#ffffff;-webkit-text-stroke:0.2px;transform:scaleX(0.9170);">Вставка</span>
<span class="t" style="left:180.30px;top:42px;font-size:12px;color:#ffffff;-webkit-text-stroke:0.2px;transform:scaleX(0.9821);">Разметка страницы</span>
<span class="t" style="left:301.00px;top:42px;font-size:12px;color:#ffffff;-webkit-text-stroke:0.2px;transform:scaleX(1.0369);">Формулы</span>
<span class="t" style="left:369.00px;top:42px;font-size:12px;color:#ffffff;-webkit-text-stroke:0.2px;transform:scaleX(0.9936);">Данные</span>
<span class="t" style="left:426.60px;top:42px;font-size:12px;color:#ffffff;-webkit-text-stroke:0.2px;transform:scaleX(0.9711);">Рецензирование</span>
<span class="t" style="left:531.60px;top:42px;font-size:12px;color:#ffffff;-webkit-text-stroke:0.2px;transform:scaleX(0.9168);">Вид</span>
<span class="t" style="left:565.00px;top:42px;font-size:12px;color:#ffffff;-webkit-text-stroke:0.2px;transform:scaleX(0.9925);">Разработчик</span>
<span class="t" style="left:649.40px;top:42px;font-size:12px;color:#ffffff;-webkit-text-stroke:0.2px;transform:scaleX(0.9515);">Справка</span>
<span class="t" style="left:739.70px;top:42px;font-size:12px;color:#ffffff;-webkit-text-stroke:0.2px;transform:scaleX(1.0478);">Помощн</span>
<span class="t" style="left:827.50px;top:42px;font-size:12px;color:#ffffff;-webkit-text-stroke:0.2px;">Общий доступ</span>
<span class="t" style="left:8.90px;top:106px;font-size:12px;color:#ababab;transform:scaleX(0.9424);">Вставить</span>
<span class="t" style="left:3.90px;top:141px;font-size:12px;color:#262626;transform:scaleX(0.9369);">Буфер обмена</span>
<span class="t" style="left:148.70px;top:141px;font-size:12px;color:#262626;transform:scaleX(0.9604);">Шрифт</span>
<span class="t" style="left:261.80px;top:141px;font-size:12px;color:#262626;transform:scaleX(0.9466);">Выравнивание</span>
<span class="t" style="left:392.70px;top:141px;font-size:12px;color:#262626;transform:scaleX(0.8755);">Число</span>
<span class="t" style="left:552.30px;top:141px;font-size:12px;color:#262626;transform:scaleX(0.9212);">Стили</span>
<span class="t" style="left:705.50px;top:141px;font-size:12px;color:#262626;transform:scaleX(0.9887);">Ячейки</span>
<span class="t" style="left:782.40px;top:141px;font-size:12px;color:#262626;transform:scaleX(0.9538);">Редактирование</span>
<span class="t" style="left:114.80px;top:72px;font-size:12px;color:#ababab;transform:scaleX(0.9927);">Calibri</span>
<span class="t" style="left:202.70px;top:72px;font-size:12px;color:#ababab;transform:scaleX(0.8264);">12</span>
<span class="t" style="left:116.76px;top:94px;font-size:12.5px;color:#a3a3a3;font-weight:bold;transform:scaleX(0.9615);">Ж</span>
<span class="t" style="left:138.90px;top:94px;font-size:12.5px;color:#a3a3a3;font-weight:bold;font-style:italic;transform:scaleX(0.9444);">К</span>
<span class="t" style="left:162.20px;top:94px;font-size:12.5px;color:#a3a3a3;font-weight:bold;transform:scaleX(0.9000);">Ч</span>
<span class="t" style="left:204.30px;top:95px;font-size:13.5px;color:#b0b0b0;font-weight:bold;transform:scaleX(0.9100);">A</span>
<span class="t" style="left:227.70px;top:97px;font-size:10.5px;color:#b0b0b0;font-weight:bold;transform:scaleX(0.8375);">A</span>
<span class="t" style="left:194.20px;top:115px;font-size:15px;color:#aeaeae;font-weight:bold;transform:scaleX(0.9000);">A</span>
<span class="t" style="left:381.80px;top:72px;font-size:12px;color:#ababab;transform:scaleX(1.0314);">Общий</span>
<span class="t" style="left:417.60px;top:93px;font-size:15px;color:#a3a3a3;-webkit-text-stroke:0.35px;transform:scaleX(0.9308);">%</span>
<span class="t" style="left:437.90px;top:95px;font-size:9.5px;color:#a3a3a3;-webkit-text-stroke:0.35px;transform:scaleX(0.9186);">000</span>
<span class="t" style="left:494.30px;top:72px;font-size:12px;color:#ababab;transform:scaleX(0.9929);">Условное форматирование</span>
<span class="t" style="left:494.30px;top:95px;font-size:12px;color:#ababab;">Форматировать как таблицу</span>
<span class="t" style="left:494.30px;top:117px;font-size:12px;color:#ababab;transform:scaleX(0.9700);">Стили ячеек</span>
<span class="t" style="left:703.50px;top:72px;font-size:12px;color:#ababab;transform:scaleX(0.9385);">Вставить</span>
<span class="t" style="left:703.50px;top:95px;font-size:12px;color:#ababab;transform:scaleX(0.9525);">Удалить</span>
<span class="t" style="left:703.50px;top:118px;font-size:12px;color:#ababab;transform:scaleX(0.9738);">Формат</span>
<span class="t" style="left:7.30px;top:613px;font-size:12px;color:#444;transform:scaleX(0.9373);">Правка</span>
<span class="t" style="left:883.80px;top:613px;font-size:12px;color:#a6a6a6;transform:scaleX(0.8499);">100 %</span>
</div>
</body></html>
